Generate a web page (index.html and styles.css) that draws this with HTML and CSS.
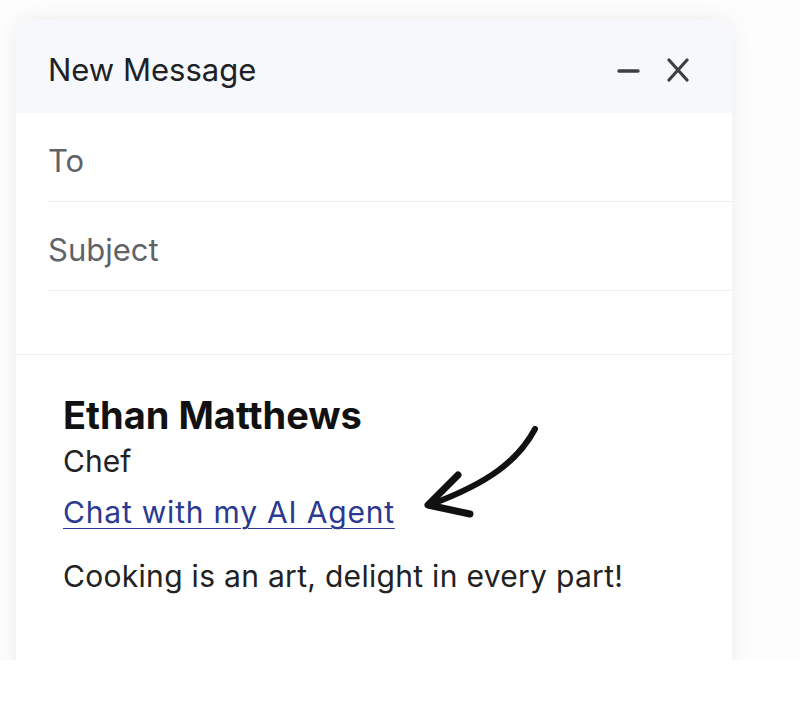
FILE: index.html
```html
<!DOCTYPE html>
<html><head>
<meta http-equiv="Content-Type" content="text/html; charset=utf-8">
<meta name="viewport" content="width=device-width, initial-scale=1">
<title>New Message</title>
<link rel="stylesheet" href="styles.css"></head>

<body>
<div class="stage">
<div class="compose">
	<div class="head">
		<span class="title">New Message</span>
		<span class="tools">
			<svg class="ico" width="24" height="24" viewBox="0 0 24 24"><path d="M3 13h19" stroke="#3c4043" stroke-width="3.4" stroke-linecap="round"/></svg>
			<svg class="ico" width="24" height="24" viewBox="0 0 24 24"><path d="M3 2l18 20M21 2L3 22" stroke="#3c4043" stroke-width="3.2" stroke-linecap="round"/></svg>
		</span>
	</div>
	<div class="field">To</div>
	<div class="field">Subject</div>
	<div class="spacer"></div>

	<!-- signature block -->
	<div class="sig">
		<div class="name">Ethan Matthews</div>
		<div class="role">Chef</div>
		<a class="agent" href="#">Chat with my AI Agent</a>
		<p class="motto">Cooking is an art, delight in every part!</p>
		<svg class="arrow" width="130" height="100" viewBox="0 0 130 100">
			<path d="M117 8 C100 40 70 62 14 83" fill="none" stroke="#111" stroke-width="6" stroke-linecap="round"/>
			<path d="M40 54 L10 84 L52 93" fill="none" stroke="#111" stroke-width="7" stroke-linecap="round" stroke-linejoin="round"/>
		</svg>
	</div>
</div>
</div>
</body>
</html>
```

FILE: styles.css
```css
/* page: white, the picture stops at 660px */
body {
	margin: 0;
	background: #ffffff;
	font-family: Inter, "Liberation Sans", Arial, sans-serif;
}
.stage {
	height: 660px;
	overflow: hidden;
	background: #fdfdfd;
	padding: 20px 0 0 16px;
	box-sizing: border-box;
}

.compose {
	width: 716px;
	height: 700px;
	background: #ffffff;
	border-radius: 14px 14px 0 0;
	box-shadow: 0 0 24px rgba(0, 0, 0, .07);
	overflow: hidden;
}

.head {
	height: 93px;
	background: #f6f8fb;
	display: flex;
	align-items: center;
	justify-content: space-between;
	padding: 6px 42px 0 32px;
	box-sizing: border-box;
}
.title {
	font-size: 31px;
	color: #202124;
}
.tools {
	display: flex;
	gap: 26px;
	align-items: center;
}
.ico {
	display: block;
}

.field {
	margin-left: 32px;
	height: 89px;
	border-bottom: 1px solid #eceef2;
	display: flex;
	align-items: center;
	font-size: 31px;
	color: #5f6368;
	padding-top: 6px;
	box-sizing: border-box;
}
.spacer {
	height: 63px;
	border-bottom: 1px solid #eceef2;
}

.sig {
	position: relative;
	padding: 36px 0 0 47px;
}
.name {
	font-size: 38px;
	font-weight: 700;
	color: #111111;
	line-height: 48px;
}
.role {
	font-size: 30px;
	color: #222222;
	line-height: 44px;
}
.agent {
	display: inline-block;
	font-size: 30px;
	letter-spacing: 0.8px;
	color: #2b3990;
	line-height: 58px;
	text-decoration-thickness: 1px;
	text-underline-offset: 5px;
}
.motto {
	margin: 17px 0 0 0;
	font-size: 30px;
	letter-spacing: 0.3px;
	color: #222222;
}
.arrow {
	position: absolute;
	left: 402px;
	top: 66px;
}
```
